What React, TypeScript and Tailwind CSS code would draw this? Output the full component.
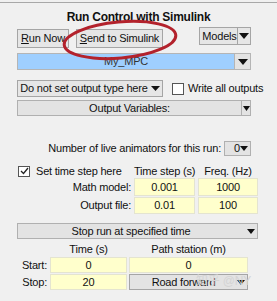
import React from "react";

const Tri = ({ w = 10, h = 6 }: { w?: number; h?: number }) => (
  <svg width={w} height={h} viewBox={`0 0 ${w} ${h}`}>
    <polygon points={`0,0 ${w},0 ${w / 2},${h}`} fill="#111" />
  </svg>
);

const Yellow = ({ w, children }: { w: string; children: React.ReactNode }) => (
  <div className={`${w} h-full bg-[#ffffcc] border border-[#e4e4d0] flex items-center justify-center`}>
    {children}
  </div>
);

export default function App() {
  return (
    <div
      className="relative w-[277px] h-[301px] overflow-hidden bg-[#f0f0f0] text-[#111] text-[11px] tracking-[-0.2px] leading-none whitespace-nowrap"
      style={{ fontFamily: '"Liberation Sans", Arial, "Noto Sans CJK SC", sans-serif' }}
    >
      <div className="mt-[2px] border-t border-[#a8a8a8]" />
      <div className="mt-[6px] h-[16px] leading-[16px] text-center font-bold text-[12px] tracking-[-0.25px]">Run Control with Simulink</div>

      {/* Row 1 */}
      <div className="mt-[2px] pl-[17px] flex items-start h-[21px]">
        <div className="mt-[2px] w-[52px] h-[19px] border border-[#a5a5a5] bg-[#e6e6e6] flex items-center justify-center">
          <span><span className="underline">R</span>un Now</span>
        </div>
        <div className="ml-[7px] mt-[2px] w-[87px] h-[19px] border border-[#a5a5a5] bg-[#e6e6e6] flex items-center justify-center">
          <span><span className="underline">S</span>end to Simulink</span>
        </div>
        <div className="ml-[36px] w-[52px] h-[18px] border border-[#a5a5a5] bg-[#e6e6e6] flex items-center">
          <span className="flex-1 text-center pl-[2px]">Models</span>
          <div className="w-[13px] h-full border-l border-[#a5a5a5] flex items-center justify-center">
            <Tri />
          </div>
        </div>
      </div>

      {/* Row 2 */}
      <div className="mt-[5px] ml-[17px] w-[234px] h-[17px] flex border border-[#b5b5b5]">
        <div className="flex-1 bg-[#9fcfff] flex items-center justify-center text-[#333]">My_MPC</div>
        <div className="w-[16px] bg-[#e3e3e3] border-l border-[#b5b5b5] flex items-center justify-center">
          <Tri />
        </div>
      </div>

      {/* Row 3 */}
      <div className="mt-[10px] ml-[17px] h-[17px] flex items-center">
        <div className="w-[146px] h-[17px] border border-[#a5a5a5] bg-[#e6e6e6] flex items-center justify-center gap-[3px]">
          <span>Do not set output type here</span>
          <Tri w={9} h={5} />
        </div>
        <div className="ml-[9px] w-[12px] h-[12px] border border-[#555] bg-white" />
        <span className="ml-[4px]">Write all outputs</span>
      </div>

      {/* Row 4 */}
      <div className="mt-[3px] ml-[17px] w-[234px] h-[16px] flex border border-[#b0b0b0] bg-[#e3e3e3]">
        <div className="flex-1 flex items-center justify-center">Output Variables:</div>
        <div className="w-[9px] border-l border-[#b0b0b0] flex items-center justify-center">
          <Tri w={7} h={5} />
        </div>
      </div>

      {/* Row 5 */}
      <div className="mt-[25px] h-[15px] flex items-center justify-end pr-[26px]">
        <span>Number of live animators for this run:</span>
        <div className="ml-[3px] w-[27px] h-[15px] border border-[#b0b0b0] bg-[#e3e3e3] flex items-center justify-between pl-[9px] pr-[2px]">
          <span>0</span>
          <Tri w={8} h={5} />
        </div>
      </div>

      {/* Row 6 */}
      <div className="mt-[8px] h-[14px] flex items-center">
        <div className="ml-[18px] w-[12px] h-[11px] border border-[#555] bg-white flex items-center justify-center">
          <svg width="9" height="8" viewBox="0 0 9 8"><polyline points="1,4 3.5,6.5 8,1" fill="none" stroke="#222" strokeWidth="1.3" /></svg>
        </div>
        <span className="ml-[6px] w-[98px]">Set time step here</span>
        <span className="w-[61px] text-center">Time step (s)</span>
        <span className="ml-[3px] w-[60px] text-center">Freq. (Hz)</span>
      </div>

      {/* Row 7 */}
      <div className="h-[18px] flex items-stretch">
        <span className="w-[131px] flex items-center justify-end">Math model:</span>
        <div className="ml-[3px] flex h-full gap-[3px]">
          <Yellow w="w-[61px]">0.001</Yellow>
          <Yellow w="w-[60px]">1000</Yellow>
        </div>
      </div>

      {/* Row 8 */}
      <div className="mt-[1px] h-[17px] flex items-stretch">
        <span className="w-[131px] flex items-center justify-end">Output file:</span>
        <div className="ml-[3px] flex h-full gap-[3px]">
          <Yellow w="w-[61px]">0.01</Yellow>
          <Yellow w="w-[60px]">100</Yellow>
        </div>
      </div>

      {/* Row 9 */}
      <div className="mt-[9px] ml-[17px] w-[241px] h-[16px] flex border border-[#b0b0b0] bg-[#e3e3e3]">
        <div className="flex-1 flex items-center justify-center">Stop run at specified time</div>
        <div className="w-[13px] flex items-center justify-center">
          <Tri w={8} h={5} />
        </div>
      </div>

      {/* Row 10 headers */}
      <div className="mt-[3px] h-[14px] flex items-center">
        <span className="ml-[50px] w-[77px] text-center">Time (s)</span>
        <span className="ml-[2px] w-[119px] text-center">Path station (m)</span>
      </div>

      {/* Row 11 */}
      <div className="mt-[1px] h-[16px] flex items-stretch">
        <span className="w-[47px] flex items-center justify-end">Start:</span>
        <div className="ml-[3px] flex h-full gap-[2px]">
          <Yellow w="w-[77px]">0</Yellow>
          <Yellow w="w-[119px]">0</Yellow>
        </div>
      </div>

      {/* Row 12 */}
      <div className="mt-[1px] h-[16px] flex items-stretch">
        <span className="w-[47px] flex items-center justify-end">Stop:</span>
        <div className="ml-[3px] flex h-full gap-[2px]">
          <Yellow w="w-[77px]">20</Yellow>
          <div className="w-[119px] h-full border border-[#a5a5a5] bg-[#e3e3e3] flex items-center">
            <span className="flex-1 text-center pl-[2px]">Road forward</span>
            <div className="w-[12px] flex items-center justify-center">
              <Tri w={8} h={5} />
            </div>
          </div>
        </div>
      </div>

      {/* watermark */}
      <div className="absolute left-[196px] top-[275px] text-[12px] text-[#d4d4d4] whitespace-nowrap">
        知乎 @NY
      </div>

      {/* red ellipse annotation */}
      <svg className="absolute left-0 top-0 pointer-events-none" width="277" height="80" viewBox="0 0 277 80">
        <ellipse cx="120" cy="40" rx="56" ry="18" fill="none" stroke="#b3222c" strokeWidth="3" transform="rotate(-5 120 40)" />
      </svg>
    </div>
  );
}
